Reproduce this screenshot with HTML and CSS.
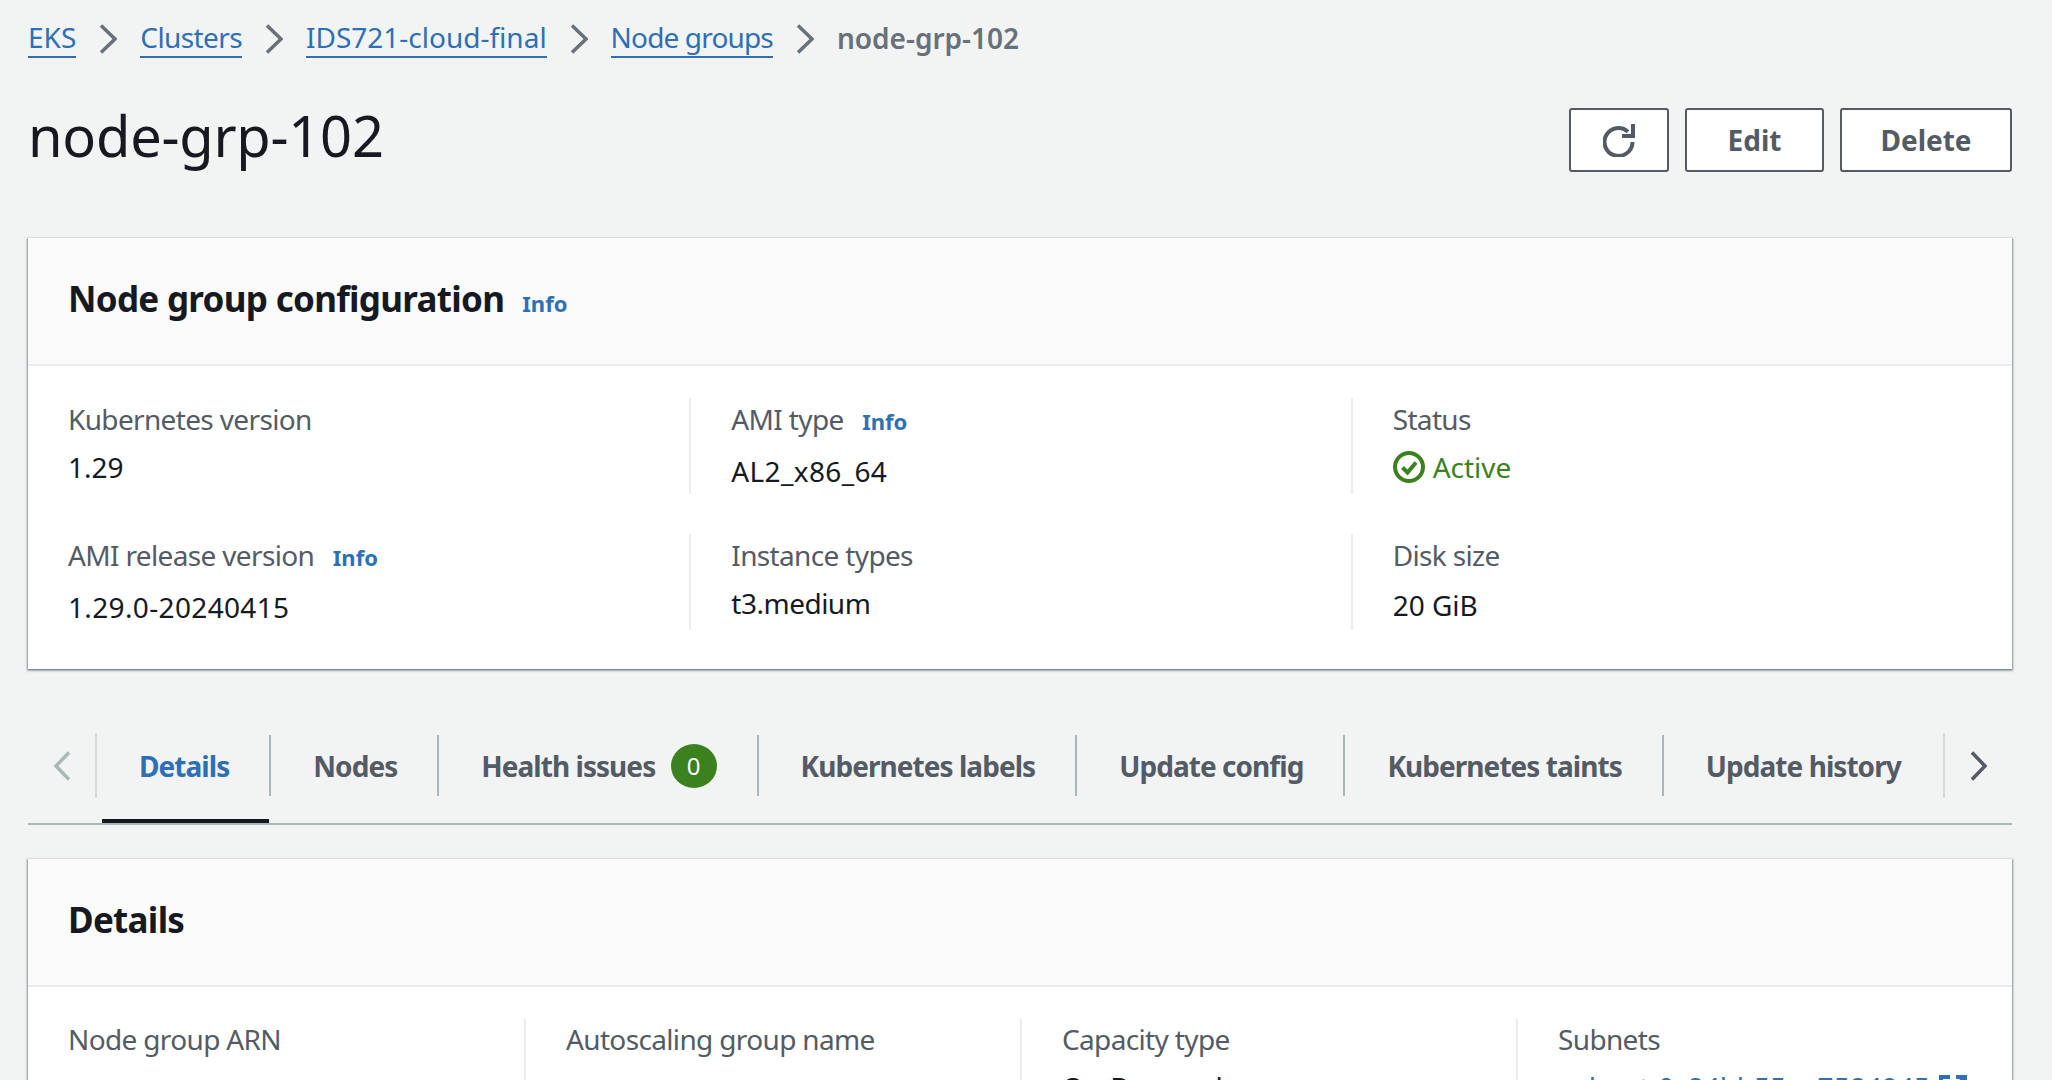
FILE: index.html
```html
<!DOCTYPE html>
<html lang="en">
<head>
  <meta charset="UTF-8" />
  <title>node-grp-102</title>
  <link rel="stylesheet" href="styles.css">
</head>
<body>
  <nav class="crumbs">
    <a class="crumb-wide" href="#">EKS</a>
    <svg class="crumb-sep" viewBox="0 0 18 30"><path d="M2 1.500L16 15 2 28.500"/></svg>
    <a href="#">Clusters</a>
    <svg class="crumb-sep" viewBox="0 0 18 30"><path d="M2 1.500L16 15 2 28.500"/></svg>
    <a class="crumb-wide" href="#">IDS721-cloud-final</a>
    <svg class="crumb-sep" viewBox="0 0 18 30"><path d="M2 1.500L16 15 2 28.500"/></svg>
    <a class="crumb-tight" href="#">Node groups</a>
    <svg class="crumb-sep" viewBox="0 0 18 30"><path d="M2 1.500L16 15 2 28.500"/></svg>
    <span class="crumb-current">node-grp-102</span>
  </nav>

  <header class="page-head">
    <h1>node-grp-102</h1>
    <div class="actions">
      <button class="btn btn-icon" type="button" aria-label="Refresh">
        <svg viewBox="0 0 32 33"><path class="ring" d="M29.500 18A14 14 0 1 1 25 7.700"/><path class="tip" d="M32 0v14H19v-4h9V0z"/></svg>
      </button>
      <button class="btn btn-edit" type="button">Edit</button>
      <button class="btn btn-delete" type="button">Delete</button>
    </div>
  </header>

  <section class="card">
    <div class="card-head">
      <h2>Node group configuration</h2>
      <a class="info info-head" href="#">Info</a>
    </div>
    <div class="config-grid">
      <div class="cell">
        <div class="label">Kubernetes version</div>
        <div class="value">1.29</div>
      </div>
      <div class="cell">
        <div class="label">AMI type <a class="info" href="#">Info</a></div>
        <div class="value value-low value-wide">AL2_x86_64</div>
      </div>
      <div class="cell">
        <div class="label">Status</div>
        <div class="value status">
          <svg viewBox="0 0 32 32"><circle cx="16" cy="16" r="14"/><path d="M9.500 16.500l5 5 8.500-10"/></svg>
          Active
        </div>
      </div>
      <div class="cell">
        <div class="label">AMI release version <a class="info" href="#">Info</a></div>
        <div class="value value-low value-wide">1.29.0-20240415</div>
      </div>
      <div class="cell">
        <div class="label">Instance types</div>
        <div class="value value-tight">t3.medium</div>
      </div>
      <div class="cell">
        <div class="label">Disk size</div>
        <div class="value value-low">20 GiB</div>
      </div>
    </div>
  </section>

  <div class="tabs">
    <button class="tab-arrow tab-arrow-off" type="button" aria-label="Previous">
      <svg viewBox="0 0 18 30"><path d="M16 1.500L3 15l13 13.500"/></svg>
    </button>
    <a class="tab tab-first tab-active" href="#">Details</a>
    <a class="tab" href="#">Nodes</a>
    <a class="tab" href="#">Health issues <span class="count">0</span></a>
    <a class="tab" href="#">Kubernetes labels</a>
    <a class="tab" href="#">Update config</a>
    <a class="tab" href="#">Kubernetes taints</a>
    <a class="tab" href="#">Update history</a>
    <button class="tab-arrow tab-arrow-next" type="button" aria-label="Next">
      <svg viewBox="0 0 18 30"><path d="M2 1.500L15 15 2 28.500"/></svg>
    </button>
  </div>

  <section class="card">
    <div class="card-head">
      <h2>Details</h2>
    </div>
    <div class="details-grid">
      <div class="cell"><div class="label">Node group ARN</div></div>
      <div class="cell"><div class="label">Autoscaling group name</div></div>
      <div class="cell">
        <div class="label">Capacity type</div>
        <div class="value">On-Demand</div>
      </div>
      <div class="cell">
        <div class="label">Subnets</div>
        <div class="value">
          <a class="subnet" href="#">subnet-0c84bb55ae7584945</a>
          <svg class="ext" viewBox="0 0 28 28"><path d="M11 2H2v24h24v-9M17 2h9v9M26 2L14 14"/></svg>
        </div>
      </div>
    </div>
  </section>
</body>
</html>
```

FILE: styles.css
```css
html, body {
  height: 1080px;
  overflow: hidden;
}
body {
  margin: 0;
  padding: 0 40px 0 28px;
  background: #f2f3f3;
  color: #16191f;
  font-family: "Noto Sans", "Open Sans", sans-serif;
  font-size: 28px;
}
a {
  color: #2f6fb5;
  text-decoration: none;
}

/* breadcrumbs */
.crumbs {
  display: flex;
  align-items: center;
  height: 41px;
  padding-top: 18px;
}
.crumbs a {
  padding-bottom: 1px;
  border-bottom: 2px solid #2f6fb5;
  letter-spacing: -0.6px;
  line-height: 35px;
}
.crumbs .crumb-wide {
  letter-spacing: 0;
}
.crumbs .crumb-tight {
  letter-spacing: -0.85px;
}
.crumb-sep {
  width: 18px;
  height: 30px;
  margin: 0 23px;
  fill: none;
  stroke: #687078;
  stroke-width: 3.500;
}
.crumb-current {
  padding-bottom: 2px;
  color: #687078;
  font-weight: 600;
}

/* title row */
.page-head {
  display: flex;
  justify-content: space-between;
  align-items: flex-start;
  height: 142px;
  padding-top: 37px;
}
h1 {
  margin: 0;
  font-size: 56px;
  font-weight: 400;
  letter-spacing: -0.25px;
  line-height: 78px;
}
.actions {
  display: flex;
  gap: 16px;
  padding-top: 12px;
}
.btn {
  height: 64px;
  background: #fff;
  border: 2px solid #545b64;
  border-radius: 3px;
  color: #545b64;
  font-family: inherit;
  font-size: 28px;
  font-weight: 700;
}
.btn-icon {
  display: flex;
  align-items: center;
  justify-content: center;
  width: 100px;
  padding: 0;
}
.btn-icon svg {
  width: 32px;
  height: 33px;
}
.ring {
  fill: none;
  stroke: #545b64;
  stroke-width: 4;
}
.tip {
  fill: #545b64;
}
.btn-edit {
  width: 139px;
}
.btn-delete {
  width: 172px;
}

/* cards */
.card {
  background: #fff;
  box-shadow: 0 1px 2px 1px rgba(0, 28, 36, 0.3), 1px 1px 1px 0 rgba(0, 28, 36, 0.15), -1px 1px 1px 0 rgba(0, 28, 36, 0.15);
}
.card-head {
  display: flex;
  align-items: baseline;
  gap: 18px;
  height: 128px;
  box-sizing: border-box;
  padding: 36px 40px 0;
  background: #fafafa;
  border-bottom: 2px solid #eaeded;
}
h2 {
  margin: 0;
  font-size: 35px;
  font-weight: 700;
  letter-spacing: -0.7px;
  line-height: 50px;
}
.info {
  font-size: 22px;
  font-weight: 700;
}
.config-grid {
  display: grid;
  grid-template-columns: repeat(3, 1fr);
  row-gap: 40px;
  padding: 32px 0 39px;
}
.details-grid {
  display: grid;
  grid-template-columns: repeat(4, 1fr);
  padding: 32px 0 0;
}
.cell {
  height: 96px;
  box-sizing: border-box;
  padding: 1px 40px 0;
  border-left: 2px solid #eaeded;
}
.cell:nth-child(3n+1) {
  border-left: 0;
}
.details-grid .cell {
  height: 200px;
  padding-top: 0;
  border-left: 2px solid #eaeded;
}
.details-grid .cell:first-child {
  border-left: 0;
}
.label {
  color: #545b64;
  letter-spacing: -0.65px;
  line-height: 40px;
  white-space: nowrap;
}
.label .info {
  margin-left: 12px;
  letter-spacing: 0;
}
.value {
  margin-top: 8px;
  line-height: 40px;
  white-space: nowrap;
}
.value-low {
  margin-top: 10px;
}
.value-wide {
  letter-spacing: 0.35px;
}
.value-tight {
  letter-spacing: -0.5px;
}
.status {
  display: flex;
  align-items: center;
  gap: 8px;
  color: #3b821f;
}
.status svg {
  width: 32px;
  height: 32px;
  fill: none;
  stroke: #3b821f;
  stroke-width: 4;
}
.subnet {
  border-bottom: 2px solid #2f6fb5;
}
.ext {
  width: 28px;
  height: 28px;
  margin-left: 2px;
  vertical-align: -5px;
  fill: none;
  stroke: #2f6fb5;
  stroke-width: 4;
}

/* tabs */
.tabs {
  display: flex;
  align-items: flex-start;
  height: 190px;
  box-sizing: border-box;
  padding-top: 64px;
  background: linear-gradient(#aab7b8, #aab7b8) 0 154px / 100% 2px no-repeat;
}
.tab-arrow {
  display: flex;
  flex: none;
  align-items: center;
  justify-content: center;
  width: 69px;
  height: 65px;
  padding: 0;
  background: none;
  border: 0;
}
.tab-arrow svg {
  width: 18px;
  height: 30px;
  fill: none;
  stroke: #545b64;
  stroke-width: 3.500;
}
.tab-arrow-off {
  border-right: 2px solid #d5dbdb;
}
.tab-arrow-off svg {
  stroke: #aab7b8;
}
.tab-arrow-next {
  margin-left: auto;
  border-left: 2px solid #d5dbdb;
}
.tab {
  position: relative;
  display: flex;
  flex: none;
  align-items: center;
  height: 61px;
  margin-top: 2px;
  padding: 0 40px 0 42px;
  border-left: 2px solid #aab7b8;
  color: #545b64;
  font-weight: 700;
  letter-spacing: -0.95px;
  white-space: pre;
}
.tab-first {
  border-left: 0;
}
.tab-active {
  color: #2f6fb5;
}
.tab-active::after {
  content: "";
  position: absolute;
  left: 5px;
  right: 0;
  top: 84px;
  height: 4px;
  background: #16191f;
}
.count {
  display: flex;
  align-items: center;
  justify-content: center;
  width: 46px;
  height: 44px;
  margin-left: 9px;
  background: #3b821f;
  border-radius: 50%;
  color: #fff;
  font-size: 24px;
  font-weight: 400;
  letter-spacing: 0;
}
```
